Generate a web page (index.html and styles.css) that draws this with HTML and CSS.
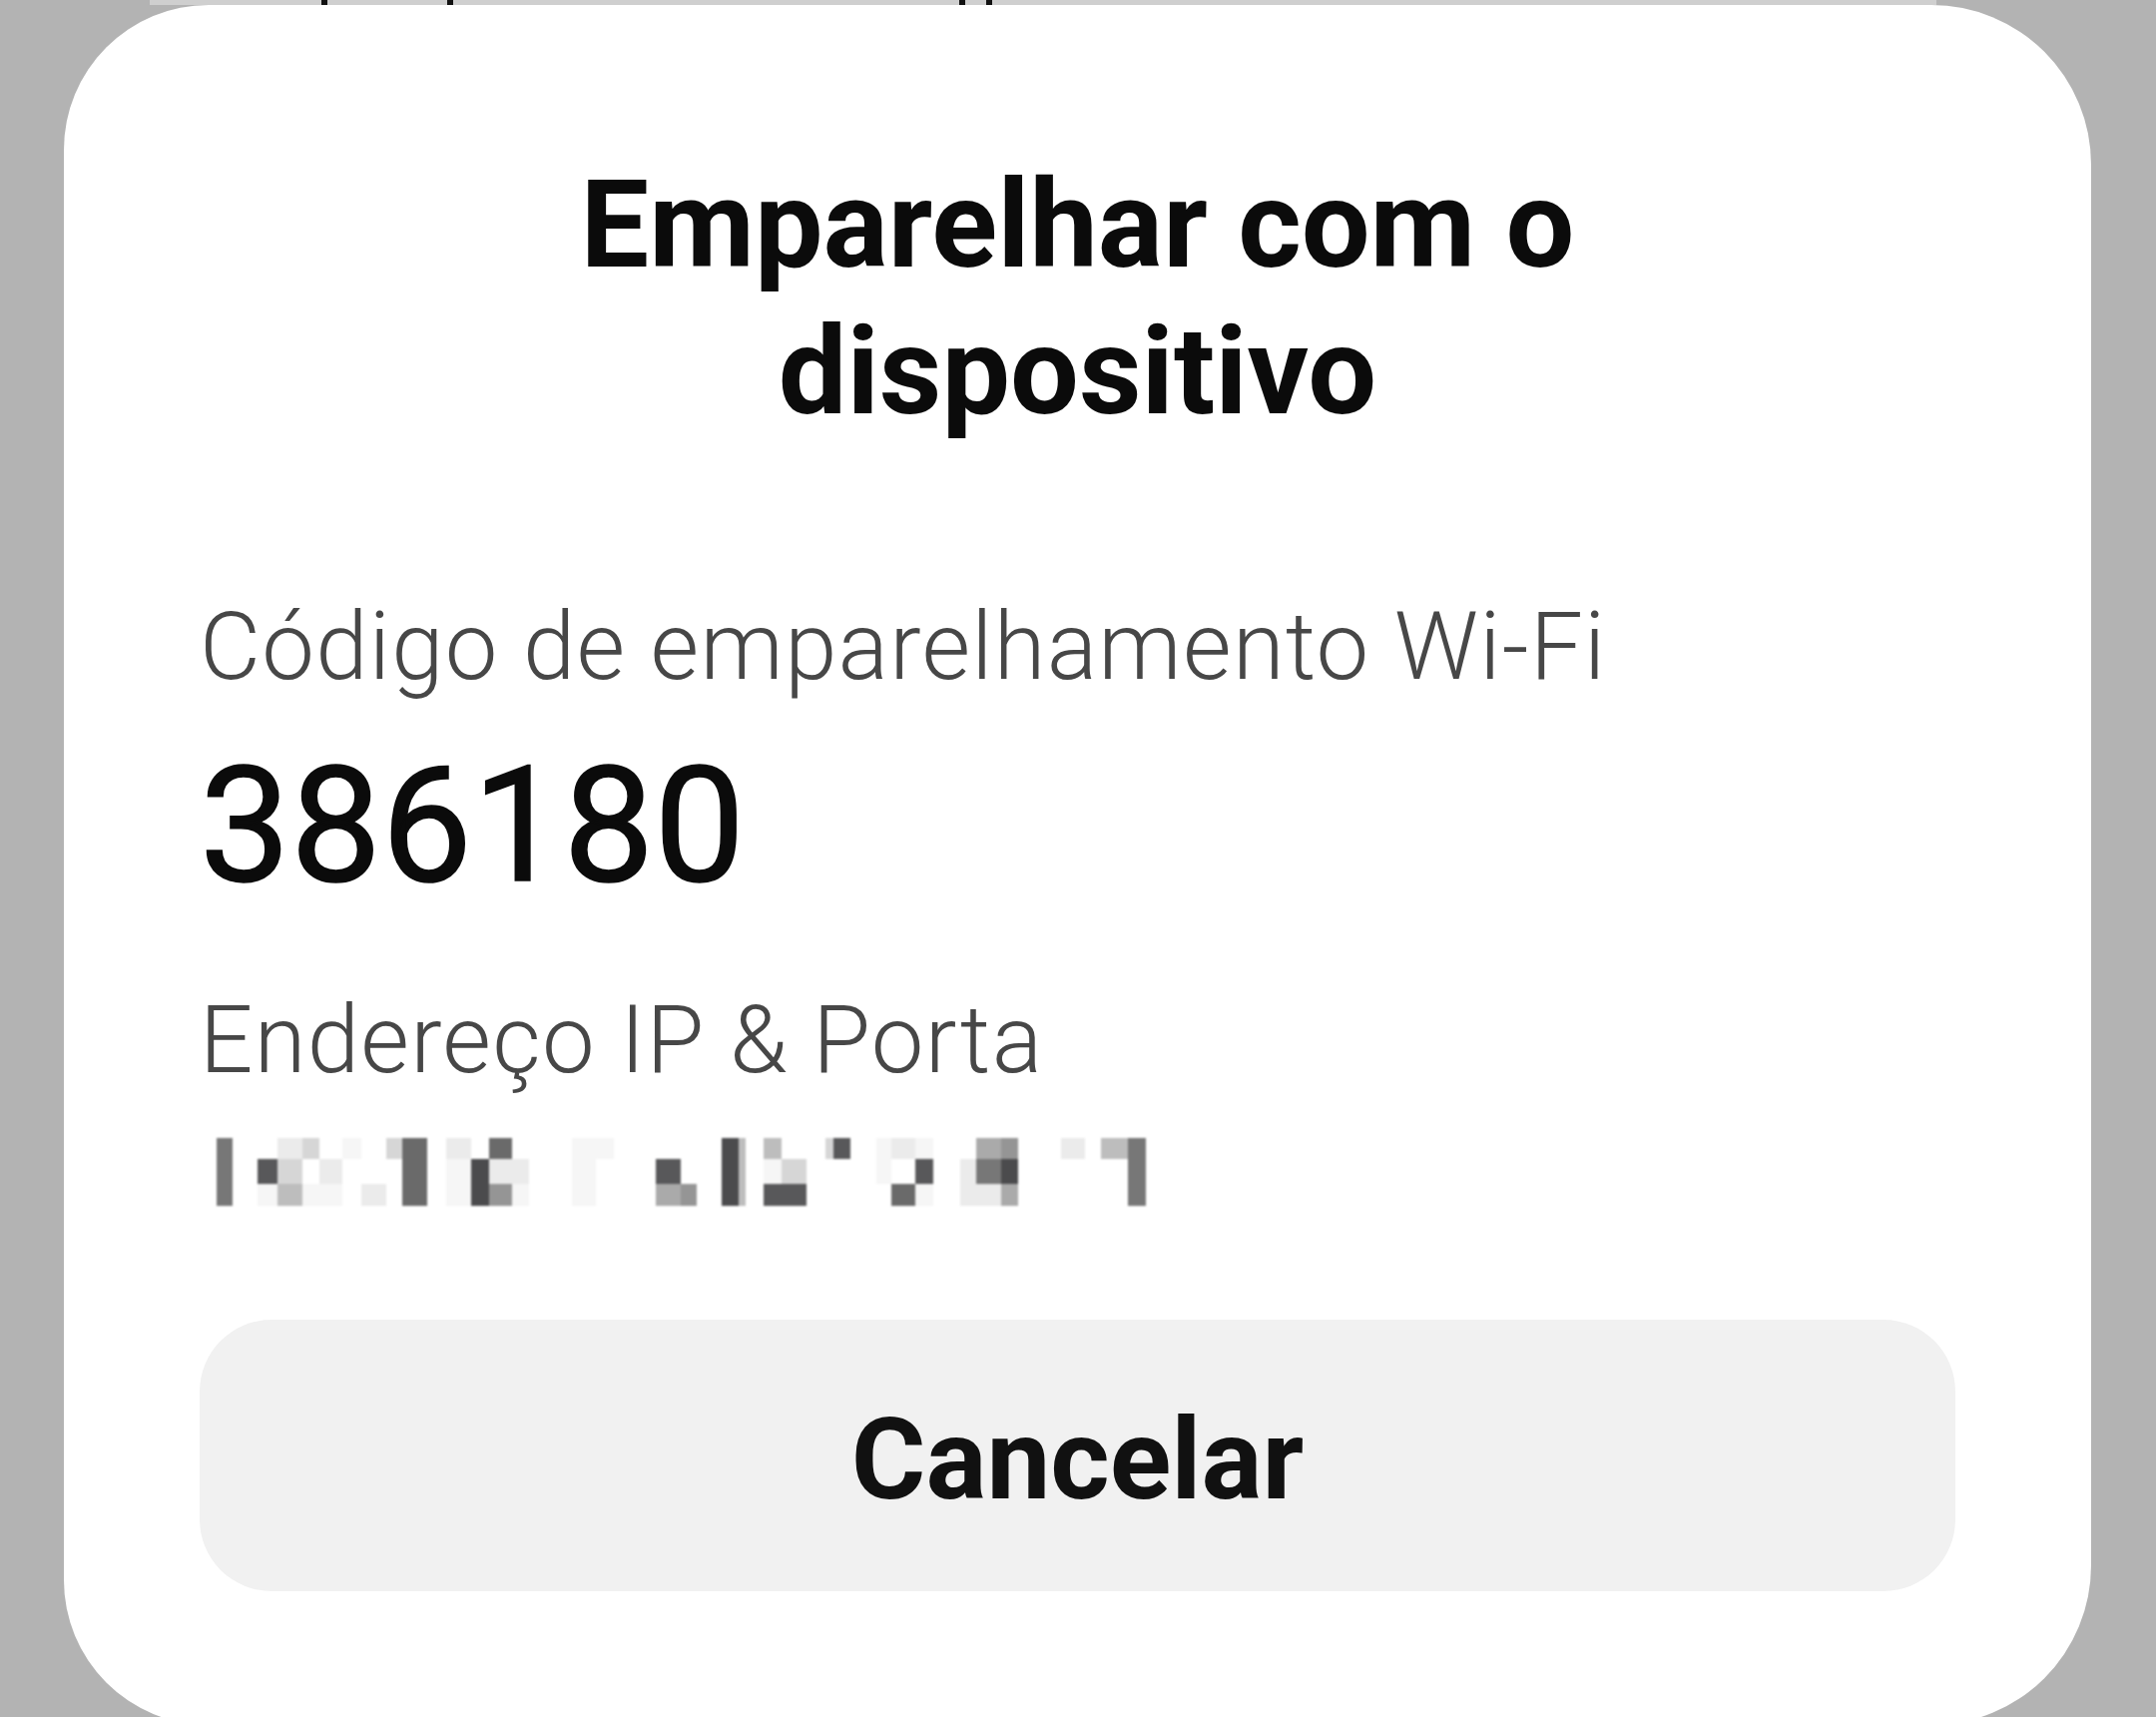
FILE: index.html
```html
<!DOCTYPE html>
<html lang="pt">
<head>
<meta charset="utf-8">
<title>Emparelhar com o dispositivo</title>
<link rel="stylesheet" href="styles.css">
</head>
<body>
<div class="behind"><span class="mark m1"></span><span class="mark m2"></span><span class="mark m3"></span><span class="mark m4"></span></div>
<div class="dialog">
  <h1 class="title">Emparelhar com o<br>dispositivo</h1>
  <div class="label label-code">Código de emparelhamento Wi-Fi</div>
  <div class="code">386180</div>
  <div class="label label-ip">Endereço IP &amp; Porta</div>
  <div class="mosaic" aria-label="endereço oculto">
    <i></i><i></i><i></i>
    <i class="k4"></i><i class="k4"></i><i class="k4"></i>
    <i></i><i></i><i></i>
    <i></i><i class="k2"></i><i class="k10"></i>
    <i class="k9"></i><i class="k8"></i><i class="k7"></i>
    <i class="k8"></i><i></i><i class="k10"></i>
    <i></i><i class="k9"></i><i class="k10"></i>
    <i class="k10"></i><i></i><i></i>
    <i></i><i></i><i class="k9"></i>
    <i class="k8"></i><i></i><i></i>
    <i class="k3"></i><i class="k3"></i><i class="k3"></i>
    <i></i><i></i><i></i>
    <i class="k9"></i><i class="k10"></i><i class="k10"></i>
    <i></i><i class="k1"></i><i class="k1"></i>
    <i class="k3"></i><i class="k9"></i><i class="k5"></i>
    <i></i><i class="k9"></i><i class="k10"></i>
    <i></i><i></i><i></i>
    <i class="k10"></i><i class="k10"></i><i class="k10"></i>
    <i class="k10"></i><i></i><i></i>
    <i></i><i></i><i></i>
    <i></i><i class="k2"></i><i class="k6"></i>
    <i></i><i></i><i class="k5"></i>
    <i></i><i></i><i></i>
    <i class="k1"></i><i class="k1"></i><i class="k1"></i>
    <i class="k7"></i><i class="k7"></i><i class="k7"></i>
    <i></i><i></i><i></i>
    <i class="k7"></i><i class="k10"></i><i class="k2"></i>
    <i></i><i class="k8"></i><i class="k2"></i>
    <i></i><i></i><i></i>
    <i class="k8"></i><i></i><i></i>
    <i class="k2"></i><i></i><i></i>
    <i></i><i></i><i></i>
    <i class="k10"></i><i class="k10"></i><i></i>
    <i class="k9"></i><i></i><i class="k3"></i>
    <i class="k10"></i><i class="k2"></i><i class="k10"></i>
    <i></i><i></i><i></i>
    <i></i><i class="k9"></i><i class="k9"></i>
    <i class="k6"></i><i class="k4"></i><i class="k9"></i>
    <i class="k5"></i><i class="k1"></i><i class="k6"></i>
    <i></i><i></i><i></i>
    <i class="k9"></i><i></i><i></i>
    <i></i><i></i><i></i>
    <i class="k7"></i><i></i><i></i>
    <i class="k4"></i><i class="k4"></i><i class="k4"></i>
  </div>
  <button class="cancel" type="button">Cancelar</button>
</div>
</body>
</html>
```

FILE: styles.css
```css
html, body {
  margin: 0;
  padding: 0;
}

body {
  width: 2160px;
  height: 1720px;
  overflow: hidden;
  background: #b3b3b3;
  font-family: Roboto, "Noto Sans", "Liberation Sans", sans-serif;
}

.behind {
  position: relative;
  height: 5px;
  margin-left: 150px;
  width: 1790px;
  background: #cfcfcf;
}

.mark {
  position: absolute;
  top: 0;
  width: 6px;
  height: 5px;
  background: #111;
}
.m1 { left: 172px; }
.m2 { left: 298px; }
.m3 { left: 811px; }
.m4 { left: 838px; }

.dialog {
  margin-left: 64px;
  width: 2031px;
  height: 1723px;
  box-sizing: border-box;
  background: #fff;
  border-radius: 145px 160px 160px 145px;
  padding: 147px 136px 0 136px;
  display: flex;
  flex-direction: column;
}

.title {
  margin: 0;
  font-size: 122px;
  line-height: 147px;
  font-weight: 700;
  color: #0b0b0b;
  text-align: center;
}

.label {
  font-size: 94px;
  line-height: 1.2;
  font-weight: 300;
  letter-spacing: 1.3px;
  color: #474747;
}

.label-code {
  margin-top: 146px;
}

.code {
  margin-top: 25px;
  font-size: 162px;
  line-height: 1.2;
  font-weight: 400;
  color: #0b0b0b;
  -webkit-text-stroke: 1.5px #0b0b0b;
}

.label-ip {
  margin-top: 62px;
}

.mosaic {
  margin-top: 41px;
  display: grid;
  grid-auto-flow: column;
  grid-template-rows: 21px 25px 22px;
  grid-template-columns: 17px 16px 25px 20px 25px 17px 23px 19px 25px 16px 25px 19px 25px 18px 23px 17px 43px 24px 18px 42px 25px 16px 25px 17px 7px 18px 18px 25px 19px 8px 17px 26px 15px 24px 18px 27px 16px 25px 17px 43px 24px 16px 27px 18px;
  width: 948px;
  filter: blur(0.8px);
}

.mosaic i { display: block; }
.k1 { background: #4b4b4d; }
.k2 { background: #58585a; }
.k3 { background: #6a6a6a; }
.k4 { background: #777777; }
.k5 { background: #959595; }
.k6 { background: #aaaaaa; }
.k7 { background: #bdbdbd; }
.k8 { background: #d6d6d6; }
.k9 { background: #ebebeb; }
.k10 { background: #f6f6f6; }

.cancel {
  margin-top: 114px;
  height: 272px;
  width: 100%;
  border: none;
  border-radius: 72px;
  background: #f1f1f1;
  font-family: Roboto, "Noto Sans", "Liberation Sans", sans-serif;
  font-size: 114px;
  font-weight: 700;
  color: #111;
  padding: 8px 0 0 0;
  display: flex;
  align-items: center;
  justify-content: center;
}
```
